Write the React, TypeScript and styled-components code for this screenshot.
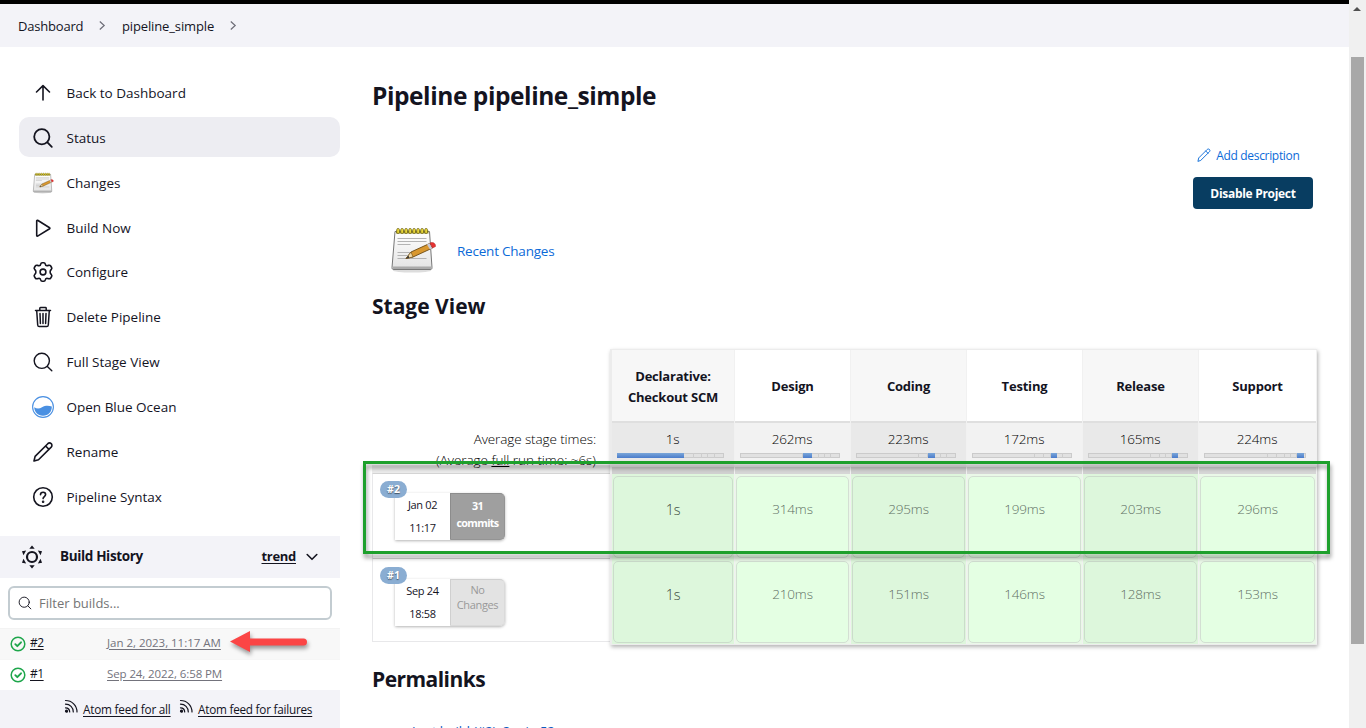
import React from 'react';
import styled, { createGlobalStyle } from 'styled-components';

const Global = createGlobalStyle`
  * { box-sizing: border-box; }
  html, body { margin: 0; overflow: hidden; background: #fff; }
  body { font-family: "Open Sans", "Noto Sans", sans-serif; color: #14141f; font-size: 14px; }
`;

const Page = styled.div`
  position: relative;
  width: 1366px;
  height: 728px;
  overflow: hidden;
  display: flex;
`;
const Content = styled.div`
  width: 1349px;
  height: 728px;
  display: flex;
  flex-direction: column;
`;
const Crumbs = styled.nav`
  flex: none;
  height: 47px;
  border-top: 4px solid #000;
  background: #f3f3f8;
  display: flex;
  align-items: center;
  padding-left: 18px;
  font-size: 13px;
`;
const Crumb = styled.span<{ $w: number; $ls?: number }>`
  width: ${p => p.$w}px;
  white-space: nowrap;
  letter-spacing: ${p => p.$ls || 0}px;
  padding-top: 1px;
`;
const CrumbArrow = styled.svg`
  margin: 0 16px 0 15px;
  width: 8px;
  height: 12px;
`;
const Body = styled.div`
  flex: 1;
  min-height: 0;
  display: flex;
`;
const Sidebar = styled.aside`
  width: 340px;
  flex: none;
  display: flex;
  flex-direction: column;
`;
const Tasks = styled.div`
  padding: 25.45px 0 0 19px;
  display: flex;
  flex-direction: column;
  gap: 4.9px;
  height: 489px;
`;
const Task = styled.a<{ $active?: boolean }>`
  height: 40px;
  flex: none;
  border-radius: 10px;
  display: flex;
  align-items: center;
  padding: 0.8px 0 0 12px;
  gap: 11.5px;
  background: ${p => (p.$active ? '#ededf2' : 'transparent')};
  svg { width: 24px; height: 24px; }
`;
const TaskLabel = styled.span`
  font-size: 13.5px;
  white-space: nowrap;
`;
const HistoryHead = styled.div`
  height: 42px;
  flex: none;
  background: #f3f3f8;
  display: flex;
  align-items: center;
  padding: 0 22px 1px 20px;
  font-weight: 700;
  font-size: 13.5px;
  svg { flex: none; }
`;
const HistoryTitle = styled.span`
  margin-left: 16px;
  flex: 1;
  margin-top: -1px;
  letter-spacing: -0.35px;
`;
const Trend = styled.a`
  text-decoration: underline;
  text-underline-offset: 2px;
  margin-right: 10px;
  margin-top: -1px;
  font-size: 13px;
  letter-spacing: -0.3px;
`;
const Filter = styled.div`
  margin: 8px 8px 8px;
  height: 34px;
  flex: none;
  border: 2px solid #c3ccd1;
  border-radius: 6px;
  display: flex;
  align-items: center;
  padding-left: 7px;
  gap: 6px;
  color: #757575;
  font-size: 13px;
`;
const Build = styled.div<{ $alt?: boolean }>`
  height: 31px;
  flex: none;
  background: ${p => (p.$alt ? '#f8f8f8' : '#fff')};
  border-top: 1px solid ${p => (p.$alt ? '#f3f3f3' : '#f6f6f6')};
  display: flex;
  align-items: center;
  padding-left: 10px;
  font-size: 12px;
`;
const BuildNo = styled.a`
  width: 77px;
  margin-left: 4px;
  margin-top: -3px;
  text-decoration: underline;
  text-underline-offset: 2px;
  letter-spacing: -0.5px;
`;
const BuildDate = styled.a<{ $ls: number }>`
  color: #73737c;
  font-size: 11.5px;
  margin-top: -4px;
  text-decoration: underline;
  text-underline-offset: 2px;
  letter-spacing: ${p => p.$ls}px;
`;
const Feeds = styled.div`
  flex: 1;
  background: #f3f3f8;
  display: flex;
  align-items: flex-start;
  padding: 9px 0 0 64px;
  font-size: 11.75px;
`;
const Feed = styled.a<{ $w: number; $ls: number }>`
  display: flex;
  width: ${p => p.$w}px;
  white-space: nowrap;
  letter-spacing: ${p => p.$ls}px;
  span { margin: 2px 0 0 4px; line-height: 17px; text-decoration: underline; text-underline-offset: 2px; }
  svg { flex: none; }
`;
const Main = styled.main`
  width: 1009px;
  padding: 0 31px 0 32px;
  display: flex;
  flex-direction: column;
`;
const H1 = styled.h1`
  margin: 32px 0 0;
  height: 34px;
  line-height: 34px;
  font-size: 24.5px;
  font-weight: 700;
  letter-spacing: -0.43px;
`;
const H2 = styled.h2<{ $top: number; $ls?: number }>`
  margin: ${p => p.$top}px 0 0;
  height: 30px;
  flex: none;
  line-height: 30px;
  font-size: 21px;
  font-weight: 700;
  letter-spacing: ${p => p.$ls || 0}px;
`;
const Actions = styled.div`
  display: flex;
  flex-direction: column;
  align-items: flex-end;
  padding: 32px 5px 0 0;
  height: 96px;
`;
const AddLink = styled.a`
  display: flex;
  align-items: center;
  gap: 4px;
  height: 20px;
  color: #0b6ad8;
  font-size: 12px;
  letter-spacing: -0.32px;
  margin-right: 13.5px;
`;
const DisableButton = styled.button`
  margin-top: 12px;
  width: 120px;
  height: 32px;
  flex: none;
  border: 0;
  border-radius: 4px;
  background: #083d61;
  color: #fff;
  font: 700 12px "Open Sans", sans-serif;
  letter-spacing: -0.3px;
  padding: 0;
  white-space: nowrap;
`;
const Recent = styled.div`
  height: 48px;
  margin-top: 17px;
  padding-left: 17px;
  display: flex;
  align-items: center;
  gap: 20px;
  color: #0b6ad8;
  font-size: 13.5px;
  letter-spacing: -0.22px;
  span { margin-top: 2px; }
`;
const StageView = styled.div`
  display: flex;
  width: 946px;
  margin-top: 28px;
`;
const RunColumn = styled.div`
  width: 238px;
  flex: none;
  display: flex;
  flex-direction: column;
`;
const Averages = styled.div`
  height: 124px;
  padding: 80px 14px 0 0;
  text-align: right;
  font-weight: 300;
  color: #000;
  font-size: 13.5px;
  line-height: 21px;
  white-space: nowrap;
  background: linear-gradient(#fff 116px, #ebebeb 116px);
  div { letter-spacing: -0.1px; }
  div:last-child { letter-spacing: -0.04px; }
`;
const Run = styled.div<{ $h: number; $top: number }>`
  height: ${p => p.$h}px;
  border: 1px solid #e8e8ea;
  border-top-color: #d4d4d4;
  border-bottom-width: ${p => (p.$h > 84 ? 0 : 1)}px;
  border-right: 0;
  background: #fff;
  padding: ${p => p.$top}px 0 0 7px;
`;
const Badge = styled.div`
  position: relative;
  z-index: 1;
  width: 27px;
  height: 17px;
  border-radius: 9px;
  background: #8aadd2;
  color: #fff;
  font-size: 10.5px;
  font-weight: 700;
  line-height: 17px;
  text-align: center;
  text-shadow: 0 1px 1px #456;
`;
const RunBox = styled.div`
  margin: -5px 0 0 15px;
  width: 110px;
  height: 47px;
  display: flex;
  font-size: 11px;
  text-align: center;
  box-shadow: 0 1px 3px rgba(0, 0, 0, 0.3);
  border-radius: 1px 5px 5px 1px;
`;
const When = styled.div`
  width: 55px;
  background: #fff;
  line-height: 22.5px;
  padding-top: 1px;
  letter-spacing: -0.35px;
`;
const Commits = styled.div<{ $none?: boolean }>`
  width: 55px;
  border-radius: 0 5px 5px 0;
  border: 1px solid ${p => (p.$none ? '#d0d0d0' : '#8c8c8c')};
  border-right-color: ${p => (p.$none ? '#dadada' : '#949494')};
  border-bottom-color: ${p => (p.$none ? '#dadada' : '#949494')};
  background: ${p => (p.$none ? '#e3e3e3' : '#9f9f9f')};
  color: ${p => (p.$none ? '#999' : '#fff')};
  font-size: ${p => (p.$none ? 11 : 10.75)}px;
  font-weight: ${p => (p.$none ? 400 : 700)};
  line-height: ${p => (p.$none ? 15 : 17)}px;
  padding-top: ${p => (p.$none ? 2 : 4)}px;
  letter-spacing: ${p => (p.$none ? -0.35 : -0.65)}px;
`;
const Stages = styled.div`
  width: 707px;
  height: 296px;
  padding: 1px 0 1px 2px;
  background: #ececec;
  box-shadow: 1px 2px 4px rgba(0, 0, 0, 0.3);
  display: grid;
  grid-template-columns: 123px 116px 116px 116px 116px 118px;
`;
const Stage = styled.div<{ $odd?: boolean }>`
  display: flex;
  flex-direction: column;
  border-right: 1px solid #f1f1f1;
  background: ${p => (p.$odd ? '#f7f7f7' : '#fff')};
`;
const StageName = styled.div`
  height: 71px;
  display: flex;
  align-items: center;
  justify-content: center;
  text-align: center;
  font-weight: 700;
  font-size: 13px;
  letter-spacing: -0.2px;
  line-height: 21px;
  padding-top: 2px;
`;
const Average = styled.div<{ $odd?: boolean }>`
  height: 53px;
  border-top: 2px solid #dfdfdf;
  background: ${p => (p.$odd ? 'linear-gradient(#e9e9e9 44px, #d0d0d0 44px)' : 'linear-gradient(#f2f2f2 44px, #d6d6d6 44px)')};
  text-align: center;
  color: #000;
  font-weight: 300;
  font-size: 13.5px;
  line-height: 20px;
  padding: 6px 10px 0 5px;
  span { margin-left: 4px; letter-spacing: -0.15px; }
`;
const Meter = styled.div`
  display: flex;
  height: 5px;
  margin-top: 4px;
  border: 1px solid #cbcbcb;
  background: #e1e1e1;
`;
const Slice = styled.i<{ $w: number; $on?: boolean }>`
  width: ${p => p.$w}%;
  height: 5px;
  margin-top: -1px;
  border-right: ${p => (p.$on ? 0 : 1)}px solid #cdcdcd;
  background: ${p => (p.$on ? 'linear-gradient(#7ba6d8, #4a7ccc)' : 'transparent')};
  &:first-child { margin-left: -1px; }
  &:last-child { margin-right: -1px; border-right: 0; }
`;
const Cell = styled.div<{ $odd?: boolean; $big?: boolean }>`
  height: 85px;
  padding: 2px 1px 1px 1px;
  background: ${p => (p.$odd ? '#def6dc' : '#eaf8e8')};
  div {
    height: 82px;
    display: flex;
    align-items: center;
    justify-content: center;
    padding-bottom: ${p => (p.$big ? 16 : 17)}px;
    border: 1px solid ${p => (p.$odd ? '#cbdccb' : '#d3dfd3')};
    border-radius: 5px;
    background: ${p => (p.$odd ? '#ddf7dc' : '#e4ffe3')};
    font-weight: 300;
    color: ${p => (p.$big ? '#36463a' : '#5f7064')};
    font-size: ${p => (p.$big ? 14.5 : 13.5)}px;
    letter-spacing: -0.15px;
  }
`;
const Permalink = styled.a`
  margin: 26px 0 0 40px;
  color: #0b5cc0;
  font-size: 13px;
  line-height: 22px;
  letter-spacing: -0.08px;
  white-space: nowrap;
`;
const Marker = styled.div`
  position: absolute;
  left: 363px;
  top: 461px;
  width: 967px;
  height: 93px;
  border: 3px solid #1ea02c;
  filter: drop-shadow(1px 4px 2px rgba(0, 0, 0, 0.4));
`;
const Arrow = styled.svg`
  position: absolute;
  left: 226px;
  top: 626px;
  filter: drop-shadow(1px 3px 2px rgba(0, 0, 0, 0.4));
`;
const Scrollbar = styled.div`
  width: 17px;
  background: #f0f0f0;
  display: flex;
  flex-direction: column;
  align-items: center;
  svg { margin: 7px 0 46px -1px; flex: none; }
`;
const Thumb = styled.div`
  width: 13px;
  height: 587px;
  background: #a8a8a8;
`;

const stroke = { fill: 'none', stroke: '#14141f', strokeLinecap: 'round' as const, strokeLinejoin: 'round' as const };

const Search = ({ w = 1.6, s = 24 }: { w?: number; s?: number }) => (
  <svg width={s} height={s} viewBox="0 0 24 24" {...stroke} strokeWidth={w}>
    <circle cx="10.8" cy="10.8" r="7.6" /><path d="M16.4 16.4l4.4 4.4" />
  </svg>
);
const Pencil = ({ color = '#14141f', s = 24, w = 1.6 }: { color?: string; s?: number; w?: number }) => (
  <svg width={s} height={s} viewBox="0 0 24 24" {...stroke} stroke={color} strokeWidth={w}>
    <path d="M3 21l1.1-4.600L16.800 3.700c1-.9 2.400-.9 3.400 0s.9 2.500 0 3.400L7.500 19.700z M14.600 6l3.400 3.400" />
  </svg>
);
const Notepad = ({ s, view = '0 0 48 48' }: { s: number; view?: string }) => (
  <svg width={s} height={s} viewBox={view}>
    <defs>
      <linearGradient id="paper" x2="0" y2="1"><stop stopColor="#fff" /><stop offset="1" stopColor="#e3e3e3" /></linearGradient>
    </defs>
    <ellipse cx="23" cy="44.500" rx="19" ry="2" fill="#ddd" />
    <path d="M6 5.500h34.500l2.500 36c0 1.500-.5 2-2 2H5c-1.500 0-2-.5-2-2z" fill="url(#paper)" stroke="#777" strokeWidth="1" />
    <path d="M4 40.500h38.500v2.500h-38.500z" fill="#aaa" />
    <path d="M7 4.500h32.500v3H7z" fill="#8b8430" />
    {[9, 13, 17, 21, 25, 29, 33, 37].map(x => (
      <rect key={x} x={x - 1.200} y="2.500" width="2.600" height="5" rx="1.200" fill="#f3e03c" stroke="#5d5510" strokeWidth=".7" />
    ))}
    <path d="M8.500 12.500h29M8.500 15.500h29M8.500 18.500h13M8.500 26.500h17M8.500 29.500h10M8.500 32.500h29" stroke="#b3b3b3" strokeWidth="1" />
    <path d="M17 32.500l5-6.500 18.500-8.500 3 4.500L24 31z" fill="#d9982f" stroke="#6b4a12" strokeWidth=".9" />
    <path d="M22 26l2 5-7 1.500z" fill="#f0d9a8" stroke="#6b4a12" strokeWidth=".6" />
    <path d="M17 32.500l2.500-3 .8 2.300z" fill="#333" />
    <path d="M38 18.500l3 5 2.500-1.300-3-5z" fill="#c9c9d8" />
    <path d="M41 17c3-1.500 6 .5 5.500 3.500L43.500 22z" fill="#e63232" stroke="#a22" strokeWidth=".5" />
  </svg>
);
const Up = () => <svg viewBox="0 0 24 24" {...stroke} strokeWidth="1.600"><path d="M12 19V5M5.500 11L12 4.600 18.500 11" /></svg>;
const Play = () => <svg viewBox="0 0 24 24" {...stroke} strokeWidth="1.600"><path d="M5.700 4.800v14.800c0 .4.500.7.900.5l12-7.300c.4-.2.400-.8 0-1L6.600 4.300c-.4-.2-.9.100-.9.500z" /></svg>;
const Gear = () => (
  <svg viewBox="0 0 24 24" {...stroke} strokeWidth="1.600">
    <circle cx="12" cy="12" r="2.900" />
    <path d="M9.700 4.100Q10 2.700 11.200 2.700h1.600Q14 2.700 14.300 4.100Q14.500 5.600 15.900 5.800Q16.800 5.800 17.700 5.300Q19 4.900 19.700 6l.9 1.500Q21.200 8.600 20.300 9.500Q19.100 10.300 19.100 12Q19.100 13.700 20.300 14.500Q21.200 15.400 20.600 16.500l-.9 1.500Q19 19.100 17.700 18.700Q16.800 18.200 15.900 18.200Q14.500 18.400 14.300 19.900Q14 21.300 12.800 21.300h-1.600Q10 21.300 9.700 19.900Q9.500 18.400 8.100 18.200Q7.200 18.200 6.300 18.700Q5 19.100 4.300 18l-.9-1.500Q2.800 15.400 3.700 14.500Q4.900 13.700 4.900 12Q4.900 10.300 3.700 9.500Q2.800 8.600 3.400 7.500L4.300 6Q5 4.900 6.300 5.300Q7.200 5.800 8.100 5.800Q9.500 5.600 9.700 4.100z" />
  </svg>
);
const Trash = () => (
  <svg viewBox="0 0 24 24" {...stroke} strokeWidth="1.500">
    <path d="M4.500 5.500h15M8.800 5.500V3.200c0-.4.300-.7.700-.7h5c.4 0 .7.300.7.700v2.300M5.700 5.500l1 14.500c.1.900.6 1.500 1.500 1.500h7.600c.9 0 1.400-.6 1.500-1.500l1-14.500M9 8.500l.4 10M12 8.500v10M15 8.500l-.4 10" />
  </svg>
);
const Ocean = () => (
  <svg viewBox="0 0 24 24">
    <circle cx="12" cy="12" r="10.400" fill="#fff" stroke="#4a90e2" strokeWidth="1.100" />
    <path d="M3.200 12.300C6 14 8.500 13.800 11 12.300c3.500-2 6.500-1.800 9.800-.8.300 5-3.500 9.300-8.800 9.300s-8.500-3.800-8.800-8.500z" fill="#4a90e2" />
  </svg>
);
const Help = () => (
  <svg viewBox="0 0 24 24" {...stroke} strokeWidth="1.600">
    <circle cx="12" cy="12" r="9.300" />
    <path d="M9.500 9.800c0-1.500 1.100-2.500 2.600-2.500s2.500 1 2.500 2.300c0 1.900-2.500 2-2.500 4" />
    <circle cx="12.100" cy="16.700" r=".5" fill="#14141f" />
  </svg>
);
const Sun = () => (
  <svg width="24" height="24" viewBox="0 0 24 24" fill="#14141f">
    <circle cx="12" cy="12" r="5" fill="none" stroke="#14141f" strokeWidth="2.200" />
    {[0, 60, 120, 180, 240, 300].map(a => <path key={a} transform={`rotate(${a} 12 12)`} d="M9.300 3.700L12 .4l2.700 3.300z" />)}
  </svg>
);
const Rss = () => (
  <svg width="15" height="15" viewBox="0 0 15 15" {...stroke} strokeWidth="1.200">
    <circle cx="2.500" cy="12.200" r="1" fill="#14141f" />
    <path d="M1.500 5.200c4.500 0 7.800 3.300 7.800 7.800M1.500 1.500c6.500 0 11.500 5 11.500 11.500M1.500 8.800c2.500 0 4.200 1.700 4.200 4.200" />
  </svg>
);
const Check = () => (
  <svg width="16" height="16" viewBox="0 0 16 16" {...stroke} stroke="#1ea64b">
    <circle cx="8" cy="8" r="6.800" strokeWidth="1.500" /><path d="M5.300 8.200l2 2L11 6.300" strokeWidth="1.900" />
  </svg>
);
const Chevron = () => (
  <CrumbArrow viewBox="0 0 8 12" fill="none" stroke="#6d6d78" strokeWidth="1.200"><path d="M1.800 1.500L6.200 5.500 1.800 9.500" /></CrumbArrow>
);

const tasks: [string, React.ReactNode][] = [
  ['Back to Dashboard', <Up />],
  ['Status', <Search w={1.8} />],
  ['Changes', <Notepad s={24} view="-2 -2 52 52" />],
  ['Build Now', <Play />],
  ['Configure', <Gear />],
  ['Delete Pipeline', <Trash />],
  ['Full Stage View', <Search w={1.4} />],
  ['Open Blue Ocean', <Ocean />],
  ['Rename', <Pencil />],
  ['Pipeline Syntax', <Help />],
];

const stages: { name: React.ReactNode; avg: string; runs: string[]; slices: number[]; on: number }[] = [
  { name: <>Declarative:<br />Checkout SCM</>, avg: '1s', runs: ['1s', '1s'], slices: [64, 9, 8, 6, 6, 7], on: 0 },
  { name: 'Design', avg: '262ms', runs: ['314ms', '210ms'], slices: [64, 9, 8, 6, 6, 7], on: 1 },
  { name: 'Coding', avg: '223ms', runs: ['295ms', '151ms'], slices: [64, 9, 8, 6, 6, 7], on: 2 },
  { name: 'Testing', avg: '172ms', runs: ['199ms', '146ms'], slices: [64, 9, 8, 6, 6, 7], on: 3 },
  { name: 'Release', avg: '165ms', runs: ['203ms', '128ms'], slices: [64, 9, 7, 6, 6, 8], on: 4 },
  { name: 'Support', avg: '224ms', runs: ['296ms', '153ms'], slices: [64, 9, 8, 6, 6, 7], on: 5 },
];

export default function App() {
  return (
    <Page>
      <Global />
      <Content>
        <Crumbs>
          <Crumb $w={65} $ls={-0.2}>Dashboard</Crumb><Chevron />
          <Crumb $w={92} $ls={-0.13}>pipeline_simple</Crumb><Chevron />
        </Crumbs>
        <Body>
          <Sidebar>
            <Tasks>
              {tasks.map(([label, icon], i) => (
                <Task key={label} $active={i === 1}>{icon}<TaskLabel>{label}</TaskLabel></Task>
              ))}
            </Tasks>
            <HistoryHead>
              <Sun />
              <HistoryTitle>Build History</HistoryTitle>
              <Trend>trend</Trend>
              <svg width="12" height="8" viewBox="0 0 12 8" {...stroke} strokeWidth="1.600"><path d="M1.200 1.500L6 6.300l4.800-4.800" /></svg>
            </HistoryHead>
            <Filter><Search s={16} w={1.4} />Filter builds...</Filter>
            <Build $alt><Check /><BuildNo>#2</BuildNo><BuildDate $ls={-0.02}>Jan 2, 2023, 11:17 AM</BuildDate></Build>
            <Build><Check /><BuildNo>#1</BuildNo><BuildDate $ls={-0.1}>Sep 24, 2022, 6:58 PM</BuildDate></Build>
            <Feeds>
              <Feed $w={115} $ls={-0.22}><Rss /><span>Atom feed for all</span></Feed>
              <Feed $w={134} $ls={-0.24}><Rss /><span>Atom feed for failures</span></Feed>
            </Feeds>
          </Sidebar>
          <Main>
            <H1>Pipeline pipeline_simple</H1>
            <Actions>
              <AddLink><Pencil color="#0b6ad8" s={16} w={1.4} />Add description</AddLink>
              <DisableButton>Disable Project</DisableButton>
            </Actions>
            <Recent><Notepad s={48} /><span>Recent Changes</span></Recent>
            <H2 $top={17}>Stage View</H2>
            <StageView>
              <RunColumn>
                <Averages>
                  <div>Average stage times:</div>
                  <div>(Average <u>full</u> run time: ~6s)</div>
                </Averages>
                <Run $h={85} $top={7}>
                  <Badge>#2</Badge>
                  <RunBox><When>Jan 02<br />11:17</When><Commits>31<br />commits</Commits></RunBox>
                </Run>
                <Run $h={84} $top={8}>
                  <Badge>#1</Badge>
                  <RunBox><When>Sep 24<br />18:58</When><Commits $none>No<br />Changes</Commits></RunBox>
                </Run>
              </RunColumn>
              <Stages>
                {stages.map((s, i) => (
                  <Stage key={i} $odd={i % 2 === 0}>
                    <StageName>{s.name}</StageName>
                    <Average $odd={i % 2 === 0}>
                      <span>{s.avg}</span>
                      <Meter>{s.slices.map((w, j) => <Slice key={j} $w={w} $on={j === s.on} />)}</Meter>
                    </Average>
                    {s.runs.map((time, j) => (
                      <Cell key={j} $odd={i % 2 === 0} $big={i === 0}><div>{time}</div></Cell>
                    ))}
                  </Stage>
                ))}
              </Stages>
            </StageView>
            <H2 $top={19} $ls={-0.55}>Permalinks</H2>
            <Permalink>Last build (#2), 3 min 52 sec ago</Permalink>
          </Main>
        </Body>
      </Content>
      <Scrollbar>
        <svg width="8" height="4" viewBox="0 0 8 4"><path d="M0 4L4 0l4 4z" fill="#505050" /></svg>
        <Thumb />
      </Scrollbar>
      <Marker />
      <Arrow width="84" height="34" viewBox="0 0 84 34">
        <path d="M4 15.500L24 5v7.500h53.500a3.500 3.500 0 0 1 0 7H24V26z" fill="#fb4545" />
      </Arrow>
    </Page>
  );
}
